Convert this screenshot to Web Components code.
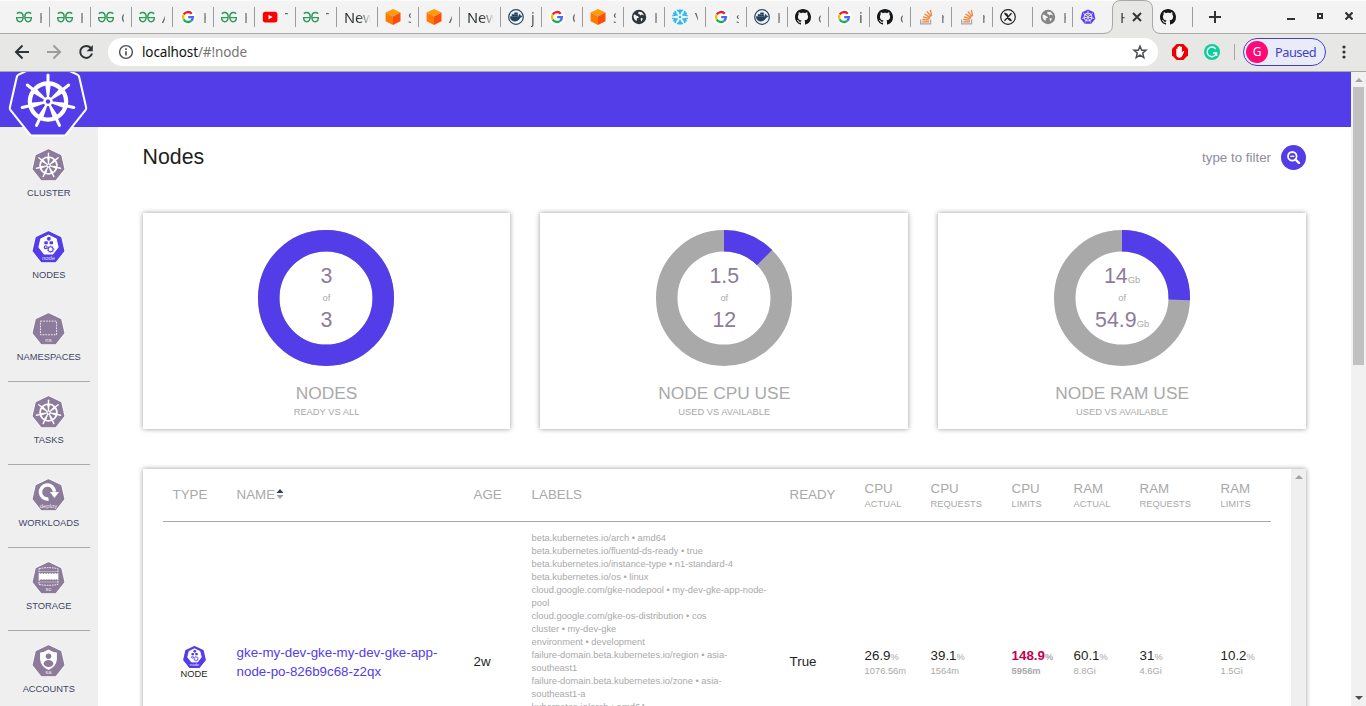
<!DOCTYPE html>
<html lang="en">
<head>
<meta charset="utf-8">
<title>Nodes</title>
<style>
html,body{margin:0;padding:0;height:100%;overflow:hidden}
body{font-family:"Liberation Sans",Arial,sans-serif;font-size:13.333px;color:#1e1f20;background:#fff}
</style>
</head>
<body>
<browser-window></browser-window>
<script>
const define = (name, html, after) => {
  customElements.define(name, class extends HTMLElement {
    connectedCallback() {
      if (this.shadowRoot) return;
      const root = this.attachShadow({ mode: 'open' });
      const t = document.createElement('template');
      t.innerHTML = typeof html === 'function' ? html(this) : html;
      root.append(t.content.cloneNode(true));
      if (after) after(this, root);
    }
  });
};

const svg = (vb, body, w = 16, h = w) => `<svg viewBox="${vb}" width="${w}" height="${h}" fill="none">${body}</svg>`;
const polar = (r, a) => [(r * Math.sin(a)).toFixed(2), (-r * Math.cos(a)).toFixed(2)];
const TURN = Math.PI * 2 / 7;
const heptagon = r => Array.from({ length: 7 }, (_, k) => polar(r, k * TURN).join()).join(' ');

/* Ship's wheel, centred on 0,0 */
const wheel = (bg, fg, thin) => {
  let s = `<circle r="21.6" fill="none" stroke="${fg}" stroke-width="${thin ? 4.4 : 5}"/>`;
  for (let k = 0; k < 7; k++) {
    const d = (k * 360 / 7).toFixed(2);
    s += `<g transform="rotate(${d})"><path d="M-1 -3L-3.400 -21H3.400L1 -3Z" fill="${fg}"/><path d="M0 -21V-31.500" stroke="${fg}" stroke-width="3.6" stroke-linecap="round"/></g>`;
  }
  return s + `<circle r="5.6" fill="${fg}"/><circle r="2.6" fill="${bg}"/>`;
};
const caption = t => `<text y="35" text-anchor="middle" font-family="Liberation Sans" font-size="17" fill="#fff" fill-opacity=".85">${t}</text>`;
const nodeArt = c => `<polygon points="${heptagon(28)}" transform="translate(0,-7)" fill="#fff" stroke="#fff" stroke-width="3" stroke-linejoin="round"/>
<g fill="${c}"><circle cx="1" cy="-25" r="5.5"/><rect x="-12" y="-18" width="10" height="9" rx="2"/><rect x="3" y="-18" width="10" height="9" rx="2"/></g>
<g stroke="${c}" fill="none"><circle cx="-8" cy="-1" r="4" stroke-width="3.4"/><circle cx="6" cy="5" r="7" stroke-width="3"/><circle cx="6" cy="5" r="9.4" stroke-width="2" stroke-dasharray="3 3"/></g>`;
const ART = {
  wheel: c => `<g transform="scale(1.12)">${wheel(c, '#fff', true)}</g>`,
  logo: c => `<g transform="translate(0,1.8)">${wheel(c, '#fff')}</g>`,
  node: c => nodeArt(c) + caption('node'),
  ns: () => `<rect x="-23" y="-24" width="46" height="39" stroke="#fff" stroke-width="2.4" stroke-dasharray="5 3"/>` + caption('ns'),
  deploy: () => `<path d="M3 17A20 20 0 1 1 20 -4" transform="translate(-3,-7)" stroke="#fff" stroke-width="10"/><path d="M4 -10H30L17 7Z" fill="#fff"/>` + caption('deploy'),
  sc: () => `<g stroke="#fff" stroke-width="2.6" stroke-dasharray="5 2.4"><path d="M-27 -28Q0 -34 27 -28V-14H-27Z"/><path d="M-27 2H27V17Q0 22 -27 17Z"/></g><rect x="-28" y="-13" width="56" height="15" fill="#fff"/><path d="M-25 -20H25M-25 10H25" stroke="#fff" stroke-opacity=".55" stroke-width="2"/>` + caption('sc'),
  sa: () => `<path d="M0 -34Q12 -26 24 -26V-6Q22 14 0 24Q-22 14 -24 -6V-26Q-12 -26 0 -34Z" fill="#fff"/><circle cy="-15" r="8" fill="#8d7b9c"/><ellipse cy="6" rx="14" ry="10" fill="#8d7b9c"/>` + caption('sa')
};

define('hept-icon', el => {
  const kind = el.getAttribute('kind'), size = +el.getAttribute('size'), c = el.getAttribute('color') || '#8d7b9c';
  const logo = kind === 'logo';
  const outline = logo
    ? `<polygon points="${heptagon(42.5)}" fill="${c}" stroke="#fff" stroke-width="10.5" stroke-linejoin="round"/><polygon points="${heptagon(42.5)}" fill="${c}" stroke="${c}" stroke-width="5.6" stroke-linejoin="round"/>`
    : `<polygon points="${heptagon(44)}" fill="${c}" stroke="#fff" stroke-width="9" stroke-linejoin="round"/><polygon points="${heptagon(44)}" fill="${c}" stroke="${c}" stroke-width="5" stroke-linejoin="round"/>`;
  return `<style>:host{display:block;flex:none}svg{display:block}</style>${svg('-50 -50 100 100', outline + ART[kind](c), size)}`;
});

/* ---------- browser frame ---------- */
const FAV = {
  gfg: svg('0 0 16 16', `<g stroke="#2f9a5a" stroke-width="1.4"><path d="M.8 4.600Q2.400 3.200 4.300 3.500Q7 4 7.200 7.500Q7.200 12.600 3.800 12.700Q.7 12.600 .6 8.600H7.200M15.200 4.600Q13.600 3.200 11.700 3.500Q9 4 8.800 7.500Q8.800 12.600 12.200 12.700Q15.300 12.600 15.400 8.600H8.800"/></g>`),
  google: svg('0 0 16 16', `<circle cx="8" cy="8" r="8" fill="#fff"/><g stroke-width="2.400"><path d="M11.700 4.700A5 5 0 0 0 3.700 5.500" stroke="#ea1d2c"/><path d="M3.700 5.500A5 5 0 0 0 3.700 10.500" stroke="#fbbc05"/><path d="M3.700 10.500A5 5 0 0 0 11.200 11.800" stroke="#14b04a"/><path d="M11.200 11.800A5 5 0 0 0 12.900 8.100H8.200" stroke="#4a6cf5"/></g>`),
  youtube: svg('0 0 16 16', `<rect x=".8" y="2.800" width="14.600" height="10.600" rx="2.600" fill="#f00"/><path d="M6.500 5.800V10.400L10.600 8.100Z" fill="#fff"/>`),
  cube: svg('0 0 16 16', `<path d="M8 0L15.500 3.600L8 7.400L.6 3.600Z" fill="#ff9a0a"/><path d="M.6 3.600L8 7.400V16L.6 12.200Z" fill="#ff7a00"/><path d="M15.500 3.600L8 7.400V16L15.500 12.200Z" fill="#f84f0c"/>`),
  docker: svg('0 0 16 16', `<circle cx="8" cy="8" r="7.300" stroke="#2d4a63" stroke-width="1.200" fill="#eef3f6"/><path d="M2.200 7.600H10.800Q11 6 11.600 5.200Q12.600 6 12.500 7Q13.500 6.800 14.200 7.200Q13.700 8.300 12.200 8.400Q10.600 12.200 6.700 12.200Q2.600 12.200 2.200 7.600ZM4 5.400H9.800V7H4ZM6.500 3.800H9.500V5H6.500Z" fill="#25435c" stroke="#25435c" stroke-width=".5"/>`),
  globe: svg('0 0 16 16', `<circle cx="8" cy="8" r="7.200" fill="#30363a"/><path d="M2.600 6Q4 5 5.200 6.600Q7 7.200 8 8.200Q7.400 9.400 6 9.300L5.600 12Q3.500 11 2.600 8.500ZM7.600 2.800L10.500 3Q12.500 4.500 13 6.500L10.700 5.600L9.400 6.500L8.500 5.200L7 4.400ZM9.600 9.300L11.600 9Q12 11 10 12.600Z" fill="#f3f3f3"/>`),
  greyglobe: svg('0 0 16 16', `<circle cx="8" cy="8" r="7.200" fill="#858585"/><path d="M2.600 6Q4 5 5.200 6.600Q7 7.200 8 8.200Q7.400 9.400 6 9.300L5.600 12Q3.500 11 2.600 8.500ZM7.600 2.800L10.500 3Q12.500 4.500 13 6.500L10.700 5.600L9.400 6.500L8.500 5.200L7 4.400ZM9.600 9.300L11.600 9Q12 11 10 12.600Z" fill="#f3f3f3"/>`),
  snow: svg('-8 -8 16 16', [0, 60, 120, 180, 240, 300].map(a => `<path transform="rotate(${a})" d="M0 -2.800V-7.800M-2.700 -7.200L0 -4.600L2.700 -7.200" stroke="#29b9ee" stroke-width="1.700"/>`).join('') + `<circle r="1.200" fill="#29b9ee"/>`),
  github: svg('0 0 16 16', `<path fill="#15181b" d="M8 0C3.580 0 0 3.580 0 8c0 3.540 2.290 6.530 5.470 7.590.4.070.55-.17.55-.38 0-.19-.01-.82-.01-1.490-2.010.37-2.530-.49-2.690-.94-.09-.23-.48-.94-.82-1.130-.28-.15-.68-.52-.01-.53.63-.01 1.080.58 1.230.82.72 1.210 1.870.87 2.330.66.07-.52.28-.87.51-1.070-1.780-.2-3.640-.89-3.640-3.950 0-.87.31-1.590.82-2.150-.08-.2-.36-1.020.08-2.120 0 0 .67-.21 2.200.82.64-.18 1.320-.27 2-.27s1.360.09 2 .27c1.530-1.040 2.200-.82 2.200-.82.44 1.100.16 1.920.08 2.120.51.56.82 1.270.82 2.150 0 3.070-1.870 3.750-3.650 3.950.29.25.54.73.54 1.480 0 1.070-.01 1.930-.01 2.200 0 .21.15.46.55.38A8.010 8.010 0 0 0 16 8c0-4.420-3.580-8-8-8Z"/>`),
  stack: svg('0 0 16 16', `<path d="M2.700 10.500V14.800H12.600V10.500" stroke="#a3a8ae" stroke-width="1.300"/><path d="M4.300 12.900H11M4.400 10.500L11.100 11.200M5 7.900L11.500 9.700M6.500 5L12.200 8.600M9 2.300L13 7.600M12.400.800L13.600 6.800" stroke="#f48034" stroke-width="1.300"/>`),
  xcirc: svg('0 0 16 16', `<circle cx="8" cy="8" r="7.300" stroke="#222" stroke-width="1.200"/><path d="M4.500 4.200L11.500 11.800M11.500 4.200L4.500 11.800M4.500 4.200Q8 5 7.500 8Q8 11 11.500 11.800" stroke="#222" stroke-width="1.300"/>`),
  k8s: svg('-50 -50 100 100', `<polygon points="${heptagon(47)}" fill="#5a3ff0"/><g transform="scale(1.150)">${wheel('#5a3ff0', '#fff', true)}</g>`)
};

define('browser-tab', el => {
  const icon = el.getAttribute('icon');
  return `<style>
  :host{display:flex;box-sizing:border-box;flex:none;width:${el.getAttribute('w') || 41}px;height:33px;align-items:center;position:relative;font:14.6px "Noto Sans",sans-serif;color:#3c4043}
  :host([sep])::before{content:"";width:1px;height:20px;background:#9c9c9c;flex:none}
  :host(:not([sep]))::before{content:"";width:1px;flex:none}
  .i{width:16px;height:16px;margin-left:${icon ? 7 : 0}px;flex:none}
  .i svg{display:block}
  .i:empty{display:none}
  .t{overflow:hidden;white-space:nowrap;line-height:20px;height:20px;width:${icon ? (el.getAttribute('tw') || 3) : 27}px;margin-left:7px;-webkit-mask-image:linear-gradient(90deg,#000 ${icon ? '0,#0008' : '55%,transparent'} 100%)}
  :host([icon=""]){color:#2e3436}
  </style><span class="i">${icon ? FAV[icon] : ''}</span><span class="t"><slot></slot></span>`;
});

define('active-tab', `<style>
 :host{display:flex;flex:none;width:40px;height:34px;position:relative;align-items:center;font:14.6px "Noto Sans",sans-serif;color:#3c4043}
 .shape{position:absolute;left:-9px;top:0}
 .t{position:relative;width:5px;height:20px;line-height:20px;overflow:hidden;margin-left:8px;-webkit-mask-image:linear-gradient(90deg,#000 50%,#0006)}
 .x{position:relative;margin-left:7px}
 </style>
 <svg class="shape" width="58" height="35" fill="none"><path d="M0 33.500Q9.500 33.500 9.500 25V9Q9.500 .500 18 .500H41Q49.500 .500 49.500 9V25Q49.500 33.500 58 33.500V35H0Z" fill="#e7e7e6"/><path d="M0 33.500Q9.500 33.500 9.500 25V9Q9.500 .500 18 .500H41Q49.500 .500 49.500 9V25Q49.500 33.500 58 33.500" stroke="#a9a9a8"/></svg>
 <span class="t"><slot></slot></span><svg class="x" width="10" height="10"><path d="M1 1L9 9M9 1L1 9" stroke="#30363a" stroke-width="2"/></svg>`);

define('tab-strip', () => {
  const T = [['gfg','H'],['gfg','H'],['gfg','C'],['gfg','A'],['google','H'],['gfg','H'],['youtube','T'],['gfg','T'],['','New'],['cube','S'],['cube','A'],['','New'],['docker','j'],['google','C'],['cube','S'],['globe','H'],['snow','V'],['google','s'],['docker','H'],['github','c'],['google','i'],['github','c'],['stack','r'],['stack','r']];
  return `<style>:host{display:flex;height:33px;background:#f3f3f3;border-bottom:1px solid #a9a9a8;padding-left:8px;box-shadow:inset 0 1px #fbfbfb}
  .plus{margin-left:16px;align-self:center}.win{margin-left:auto;display:flex;align-items:center;margin-right:13px;margin-bottom:1px}svg{display:block}
  </style>${T.map(([i, t], n) => `<browser-tab ${n ? 'sep' : ''} icon="${i}" ${t === 'j' || t === 'i' ? 'tw="6"' : ''}>${t}</browser-tab>`).join('')}
  <browser-tab sep w="40" icon="xcirc"></browser-tab><browser-tab sep w="40" icon="greyglobe">H</browser-tab><browser-tab sep w="40" icon="k8s"></browser-tab>
  <active-tab>H</active-tab><browser-tab w="40" icon="github"></browser-tab><browser-tab sep w="1"></browser-tab>
  <svg class="plus" width="12" height="12"><path d="M6 0V12M0 6H12" stroke="#2e3436" stroke-width="2"/></svg>
  <div class="win"><svg width="8" height="8"><path d="M0 7H8" stroke="#2e3436" stroke-width="2"/></svg><svg style="margin-left:22px" width="6" height="6"><rect x="1" y="1" width="4" height="4" fill="none" stroke="#2e3436" stroke-width="2"/></svg><svg style="margin-left:22px" width="8" height="8"><path d="M.5 .5L7.500 7.500M7.500 .500L.500 7.500" stroke="#2e3436" stroke-width="2.200"/></svg></div>`;
});

define('tool-bar', `<style>
 :host{display:flex;box-sizing:border-box;height:38px;background:#e7e7e6;border-bottom:1px solid #a9a9a8;align-items:center;padding:0 17px 1px 14px;font:14px "Noto Sans",sans-serif}
 svg{display:block;flex:none}
 .nav{display:flex;gap:16px;margin-right:14px}
 .url{display:flex;align-items:center;box-sizing:border-box;width:1050px;height:28px;border-radius:14px;background:#fff;padding:0 10px;color:#111}
 .url span{margin-left:8px;flex:1;font-size:13.5px;letter-spacing:-.12px}.url i{font-style:normal;color:#757575}
 .ext{margin-left:14px;display:flex;gap:16px;align-items:center}
 .bar{width:1px;height:16px;background:#a8a8a8;margin:0 8px 0 14px}
 .pill{display:flex;align-items:center;box-sizing:border-box;width:83px;height:28px;border:1px solid #4440cc;border-radius:14px;background:#e9ecf7;color:#4440cc;padding-left:2px;font-size:12.8px;letter-spacing:-.5px}
 .av{width:22px;height:22px;border-radius:50%;background:#fb0a78;color:#fff;text-align:center;line-height:22px;font-size:12px;margin-right:7px;letter-spacing:0}
 .dots{margin-left:16px}
 </style>
 <div class="nav">
 <svg width="16" height="16" fill="none" stroke="#2e3436" stroke-width="2"><path d="M15 8H2.500M8.500 1.500L2 8L8.500 14.500"/></svg>
 <svg width="16" height="16" fill="none" stroke="#9c9c9c" stroke-width="2"><path d="M1 8H13.500M7.500 1.500L14 8L7.500 14.500"/></svg>
 <svg width="16" height="16" fill="none"><path d="M12.800 4A6 6 0 1 0 14 9.500" stroke="#2e3436" stroke-width="2"/><path d="M14.800 1V7.200H8.600Z" fill="#2e3436"/></svg></div>
 <div class="url"><svg width="16" height="16" fill="none"><circle cx="8" cy="8" r="6.400" stroke="#4a4d50" stroke-width="1.400"/><path d="M8 7.200V11.500M8 4.300V5.900" stroke="#4a4d50" stroke-width="1.600"/></svg><span>localhost<i>/#!node</i></span>
 <svg width="16" height="16" fill="none" stroke="#4a4d50" stroke-width="1.500"><path d="M8 2.200L9.700 6.200H14L10.700 9L11.800 13.600L8 11.200L4.200 13.600L5.300 9L2 6.200H6.300Z"/></svg></div>
 <div class="ext"><svg width="16" height="16"><path d="M4.700 0H11.300L16 4.700V11.300L11.300 16H4.700L0 11.300V4.700Z" fill="#f00000"/><path d="M4.300 8.500V5Q4.900 4.200 5.600 5V3Q6.300 2.100 6.900 3V2.300Q7.600 1.500 8.400 2.300V3Q9.200 2.200 9.900 3V8.400L11.100 7Q12.300 6.700 12.200 7.500L10.200 12Q9.700 13.800 7.500 13.800Q4.300 13.800 4.300 10Z" fill="#fff"/></svg>
 <svg width="16" height="16" fill="none"><circle cx="8" cy="8" r="8" fill="#0bcf9b"/><path d="M11.800 5A4.800 4.800 0 1 0 12.600 9H9M12.600 9V12" stroke="#fff" stroke-width="1.400"/></svg></div>
 <div class="bar"></div><div class="pill"><span class="av">G</span>Paused</div>
 <svg class="dots" width="4" height="14" fill="#2e3436"><circle cx="2" cy="2" r="1.600"/><circle cx="2" cy="7" r="1.600"/><circle cx="2" cy="12" r="1.600"/></svg>`);

/* ---------- page ---------- */
define('scroll-track', el => `<style>
 :host{display:flex;flex-direction:column;flex:none;width:15px;background:#f1f1f1;box-sizing:border-box;align-items:center}
 .a{height:15px;display:flex;align-items:center}.th{width:11px;height:278px;background:#c1c1c1;margin-bottom:auto}
 .end{height:17px}
 svg{display:block}</style>
 <div class="a"><svg width="8" height="4"><path d="M0 4L4 0L8 4Z" fill="#a3a3a3"/></svg></div>
 ${el.hasAttribute('thumb') ? '<div class="th"></div><div class="a end"><svg width="8" height="4"><path d="M0 0L4 4L8 0Z" fill="#505050"/></svg></div>' : ''}`);

define('side-item', el => `<style>
 :host{display:flex;flex-direction:column;align-items:center;box-sizing:border-box;width:82px;height:82px;padding-top:13px;font-size:9.333px;color:#3f4766}
 :host([line]){height:83px;border-bottom:1px solid #a9a9a9}
 hept-icon{margin-right:1px}
 span{margin-top:5px;line-height:11px;white-space:nowrap}</style>
 <hept-icon kind="${el.getAttribute('kind')}" size="35" color="${el.hasAttribute('on') ? '#533de9' : '#8d7b9c'}"></hept-icon><span><slot></slot></span>`);

define('side-nav', `<style>
 :host{display:flex;flex-direction:column;align-items:center;flex:none;width:97.600px;box-sizing:border-box;padding-top:8px;background:#efefef;overflow:hidden}
 side-item{flex:none}</style>
 <side-item kind="wheel">CLUSTER</side-item><side-item kind="node" on>NODES</side-item><side-item kind="ns" line>NAMESPACES</side-item>
 <side-item kind="wheel" line>TASKS</side-item><side-item kind="deploy" line>WORKLOADS</side-item><side-item kind="sc" line>STORAGE</side-item><side-item kind="sa" line>ACCOUNTS</side-item>`);

define('top-banner', `<style>
 :host{display:block;position:relative;height:55px;flex:none;background:#533de9;z-index:1}
 div{position:absolute;left:0;top:0;width:98px;height:70px;overflow:hidden}
 hept-icon{margin:-14px 0 0 6px}</style><div><hept-icon kind="logo" size="84" color="#533de9"></hept-icon></div>`);

define('donut-card', el => {
  const v = +el.getAttribute('value'), r = 57.25, len = 2 * Math.PI * r;
  const u = el.getAttribute('unit') ? `<small>${el.getAttribute('unit')}</small>` : '';
  return `<style>
  :host{display:flex;flex-direction:column;align-items:center;box-sizing:border-box;height:216px;padding-top:17px;background:#fff;box-shadow:0 0 5px rgba(0,0,0,.4);color:#a9a9a9}
  .ring{display:grid;width:136px;height:136px;place-items:center}
  .ring>*{grid-area:1/1}svg{display:block}
  .v{display:flex;flex-direction:column;align-items:center;color:#8d7b9c;font-size:21.333px;line-height:24px;white-space:nowrap}
  .v i{font-style:normal;height:24px}small{font-size:9.333px;line-height:1;color:#a9a9a9}.of{font-size:9.333px;color:#a9a9a9;line-height:20px}
  .n{font-size:17.333px;line-height:20px;margin-top:17px}.d{font-size:9.333px;line-height:11px;margin-top:4px}
  </style>
  <div class="ring"><svg width="136" height="136" fill="none" stroke-width="21.500"><circle cx="68" cy="68" r="${r}" stroke="#a9a9a9"/><circle cx="68" cy="68" r="${r}" stroke="#533de9" transform="rotate(-90 68 68)" stroke-dasharray="${(v * len).toFixed(2)} ${len.toFixed(2)}"/></svg>
  <div class="v"><i>${el.getAttribute('used')}${u}</i><span class="of">of</span><i>${el.getAttribute('total')}${u}</i></div></div>
  <div class="n"><slot></slot></div><div class="d">${el.getAttribute('note')}</div>`;
});

const stat = (p, v, hot) => `<div class="s${hot ? ' hot' : ''}"><b>${p}</b><small>%</small><p>${v}</p></div>`;
const head = (a, b) => `<div class="h2">${a}<p>${b}</p></div>`;
define('node-table', () => {
  const labels = ['arch • amd64', 'fluentd-ds-ready • true', 'instance-type • n1-standard-4', 'os • linux'].map(x => 'beta.kubernetes.io/' + x)
    .concat(['cloud.google.com/gke-nodepool • my-dev-gke-app-node-pool', 'cloud.google.com/gke-os-distribution • cos', 'cluster • my-dev-gke', 'environment • development', 'failure-domain.beta.kubernetes.io/region • asia-southeast1', 'failure-domain.beta.kubernetes.io/zone • asia-southeast1-a', 'kubernetes.io/arch • amd64']);
  return `<style>
  :host{display:flex;height:340px;background:#fff;box-shadow:0 0 5px rgba(0,0,0,.4)}
  .tb{flex:1;padding:0 20px}
  .r{display:grid;grid-template-columns:64px 237px 58px 258px 75px 66px 81px 62px 66px 81px 60.400px;align-items:center}
  .r>*{padding-left:10px;white-space:nowrap}
  .hd{height:52px;border-bottom:1px solid #a9a9a9;color:#a9a9a9;line-height:16px}
  p{margin:0;font-size:9.333px;line-height:13px;color:#a9a9a9}
  .h2{line-height:16px;padding-top:2px}.h2 p{line-height:14px}
  .nm{display:flex;align-items:center;gap:1px}.nm svg{margin-bottom:2px}
  .bd{height:280px}
  .ty{display:flex;flex-direction:column;align-items:center;width:43px;font-size:9.333px;line-height:10px}
  .ty hept-icon{margin-bottom:-1px}
  .bd .up{padding-bottom:2px}
  .bd .link{color:#533de9;line-height:19px;white-space:normal;width:210px}
  .bd .lb{align-self:start;padding-top:10px;font-size:9.333px;line-height:13px;color:#a9a9a9;white-space:normal;width:238px}
  .s b{font-weight:400}.s small{font-size:9.333px;color:#a9a9a9}.s{line-height:15px;padding-top:2px}.s p{line-height:13px}
  .hot b,.hot{font-weight:700}.hot b{color:#c3004f}
  scroll-track{background:#efefef}
  </style><div class="tb"><div class="r hd"><div>TYPE</div><div class="nm">NAME<svg width="8" height="12"><path d="M.500 5L4 1L7.500 5Z" fill="#333a5c"/><path d="M.500 7L4 11L7.500 7Z" fill="#a0a0a8"/></svg></div><div>AGE</div><div>LABELS</div><div>READY</div>
  ${head('CPU', 'ACTUAL')}${head('CPU', 'REQUESTS')}${head('CPU', 'LIMITS')}${head('RAM', 'ACTUAL')}${head('RAM', 'REQUESTS')}${head('RAM', 'LIMITS')}</div>
  <div class="r bd"><div class="ty"><hept-icon kind="node" size="25" color="#533de9"></hept-icon>NODE</div><div class="link">gke-my-dev-gke-my-dev-gke-app-node-po-826b9c68-z2qx</div><div class="up">2w</div>
  <div class="lb">${labels.map(l => `<div>${l}</div>`).join('')}</div><div class="up">True</div>
  ${stat('26.9', '1076.56m')}${stat('39.1', '1564m')}${stat('148.9', '5956m', 1)}${stat('60.1', '8.8Gi')}${stat('31', '4.6Gi')}${stat('10.2', '1.5Gi')}</div></div><scroll-track></scroll-track>`;
});

define('nodes-page', `<style>
 :host{display:block;flex:1;padding:0 45px;overflow:hidden}
 .top{display:flex;align-items:center;height:60px;padding-bottom:26px}
 h1{margin:0;flex:1;font-weight:400;font-size:21.333px}
 .f{color:#8f8ca0;margin-right:10px}
 .q{width:25px;height:25px;border-radius:50%;background:#533de9;display:grid;place-items:center}
 .cards{display:grid;grid-template-columns:repeat(3,1fr);gap:30px;margin-bottom:40px}
 </style>
 <div class="top"><h1>Nodes</h1><span class="f">type to filter</span><span class="q"><svg width="13" height="13" fill="none" stroke="#fff"><circle cx="5.300" cy="5.300" r="4.300" stroke-width="1.800"/><path d="M8.500 8.500L12 12" stroke-width="2.400" stroke-linecap="round"/><path d="M3.300 5.300H7.300" stroke-width="1.300"/></svg></span></div>
 <div class="cards"><donut-card value="1" used="3" total="3" note="READY VS ALL">NODES</donut-card>
 <donut-card value="0.125" used="1.5" total="12" note="USED VS AVAILABLE">NODE CPU USE</donut-card>
 <donut-card value="0.255" used="14" total="54.9" unit="Gb" note="USED VS AVAILABLE">NODE RAM USE</donut-card></div>
 <node-table></node-table>`);

define('browser-window', `<style>
 :host{display:flex;flex-direction:column;width:1366px;height:706px;overflow:hidden}
 .view{display:flex;flex:1;min-height:0}.page{flex:1;display:flex;flex-direction:column;min-width:0}
 .body{flex:1;display:flex;min-height:0}tab-strip,tool-bar{flex:none}</style>
 <tab-strip></tab-strip><tool-bar></tool-bar>
 <div class="view"><div class="page"><top-banner></top-banner><div class="body"><side-nav></side-nav><nodes-page></nodes-page></div></div><scroll-track thumb></scroll-track></div>`);
</script>
</body>
</html>
